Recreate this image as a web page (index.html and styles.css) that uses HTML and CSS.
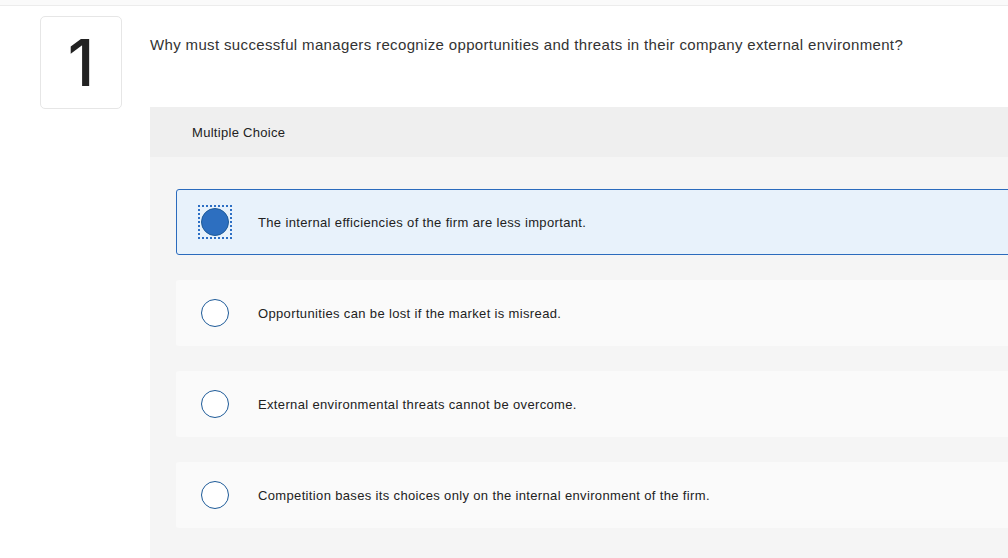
FILE: index.html
```html
<!DOCTYPE html>
<html>
<head>
<meta charset="utf-8">
<link rel="stylesheet" href="styles.css">
</head>
<body>
<div class="topbar"></div>
<div class="question">
  <div class="num-col">
    <div class="num-box">1</div>
  </div>
  <div class="main-col">
    <p class="prompt">Why must successful managers recognize opportunities and threats in their company external environment?</p>
    <div class="panel">
      <div class="panel-head">Multiple Choice</div>
      <div class="panel-body">
        <div class="option selected">
          <span class="radio-wrap"><span class="radio"></span></span>
          <span class="label">The internal efficiencies of the firm are less important.</span>
        </div>
        <div class="option">
          <span class="radio-wrap"><span class="radio"></span></span>
          <span class="label">Opportunities can be lost if the market is misread.</span>
        </div>
        <div class="option">
          <span class="radio-wrap"><span class="radio"></span></span>
          <span class="label">External environmental threats cannot be overcome.</span>
        </div>
        <div class="option">
          <span class="radio-wrap"><span class="radio"></span></span>
          <span class="label">Competition bases its choices only on the internal environment of the firm.</span>
        </div>
      </div>
    </div>
  </div>
</div>
</body>
</html>
```
FILE: styles.css
```css
html, body {
  margin: 0;
  padding: 0;
  background: #ffffff;
  overflow: hidden;
}
body {
  font-family: "Liberation Sans", "Lato", sans-serif;
  color: #333333;
  width: 1008px;
  height: 558px;
}
.topbar {
  height: 5px;
  background: #fafafa;
  border-bottom: 1px solid #ececec;
}
.question {
  display: flex;
  padding-top: 10px;
}
.num-col {
  width: 150px;
  flex: none;
  padding-left: 40px;
  box-sizing: border-box;
}
.num-box {
  width: 80px;
  height: 91px;
  border: 1px solid #e6e6e6;
  border-radius: 5px;
  display: flex;
  align-items: center;
  justify-content: center;
  font-size: 64px;
  font-weight: 500;
  color: #222222;
  font-family: "Inter", "Liberation Sans", sans-serif;
  line-height: 1;
}
.main-col {
  flex: none;
  width: 900px;
}
.prompt {
  margin: 0;
  padding-top: 19px;
  font-size: 15px;
  line-height: 20px;
  letter-spacing: 0.35px;
  height: 72px;
  box-sizing: content-box;
  color: #333333;
}
.panel {
  background: #f5f5f5;
  height: 460px;
}
.panel-head {
  background: #efefef;
  height: 50px;
  display: flex;
  align-items: center;
  padding-left: 42px;
  font-size: 13px;
  letter-spacing: 0.3px;
  color: #222222;
}
.panel-body {
  padding: 32px 0 0 26px;
  display: flex;
  flex-direction: column;
  gap: 25px;
}
.option {
  height: 66px;
  background: #fafafa;
  border-radius: 3px;
  display: flex;
  align-items: center;
  box-sizing: border-box;
  border: 1px solid transparent;
}
.option.selected {
  background: #e8f2fb;
  border-color: #2b6bbd;
}
.radio-wrap {
  width: 34px;
  height: 34px;
  margin-left: 21px;
  box-sizing: border-box;
  display: flex;
  align-items: center;
  justify-content: center;
  border: 2px dotted transparent;
}
.selected .radio-wrap {
  border-color: #2d6fc4;
}
.radio {
  width: 28px;
  height: 28px;
  box-sizing: border-box;
  border-radius: 50%;
  border: 1.5px solid #1d5a98;
  background: #ffffff;
}
.selected .radio {
  background: #2d6fc0;
  border-color: #1d5a98;
}
.label {
  margin-left: 26px;
  font-size: 13px;
  letter-spacing: 0.35px;
  color: #222222;
}
```
